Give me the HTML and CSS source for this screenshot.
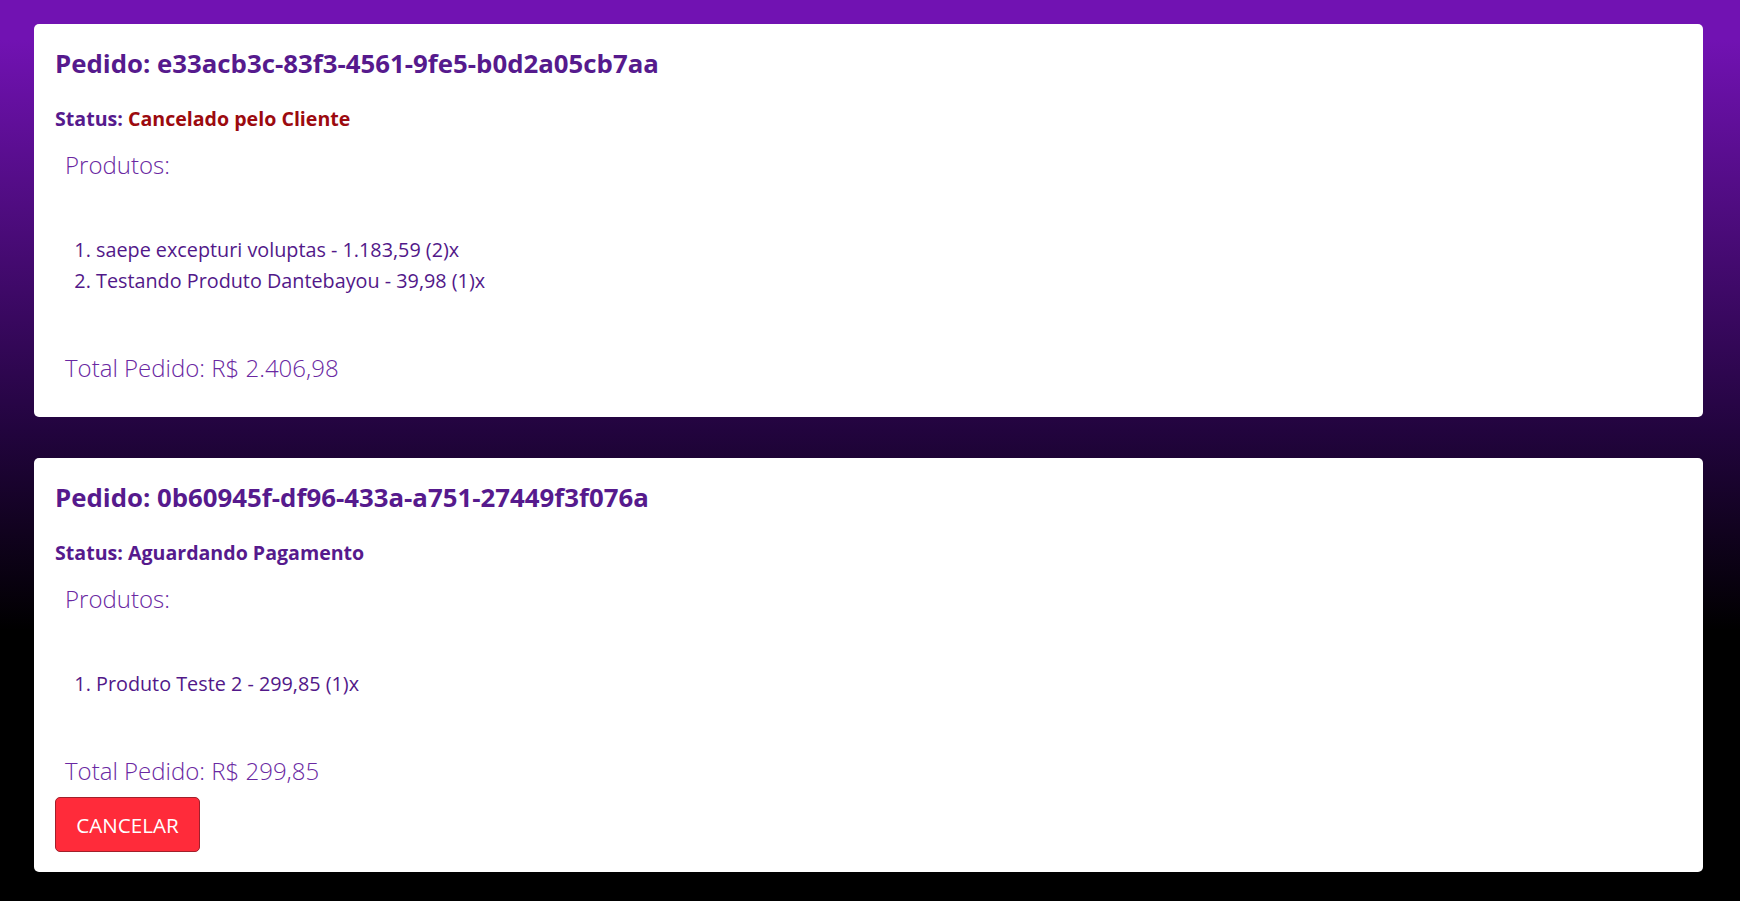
FILE: index.html
```html
<!DOCTYPE html>
<html lang="pt-BR">
<head>
<meta charset="utf-8">
<title>Pedidos</title>
<link rel="stylesheet" href="styles.css">
</head>
<body>
<main class="pedidos">
  <section class="pedido">
    <h2 class="pedido-titulo">Pedido: e33acb3c-83f3-4561-9fe5-b0d2a05cb7aa</h2>
    <h3 class="pedido-status">Status: <span class="status-cancelado">Cancelado pelo Cliente</span></h3>
    <div class="produtos">
      <p class="produtos-label">Produtos:</p>
      <ol class="produtos-lista">
        <li>saepe excepturi voluptas - 1.183,59 (2)x</li>
        <li>Testando Produto Dantebayou - 39,98 (1)x</li>
      </ol>
      <p class="total">Total Pedido: R$ 2.406,98</p>
    </div>
  </section>
  <section class="pedido">
    <h2 class="pedido-titulo">Pedido: 0b60945f-df96-433a-a751-27449f3f076a</h2>
    <h3 class="pedido-status">Status: Aguardando Pagamento</h3>
    <div class="produtos">
      <p class="produtos-label">Produtos:</p>
      <ol class="produtos-lista">
        <li>Produto Teste 2 - 299,85 (1)x</li>
      </ol>
      <p class="total">Total Pedido: R$ 299,85</p>
    </div>
    <button class="btn-cancelar" type="button">CANCELAR</button>
  </section>
</main>
</body>
</html>
```

FILE: styles.css
```css
html, body {
  margin: 0;
  padding: 0;
}
body {
  min-height: 100vh;
  font-family: "Open Sans", "Noto Sans", sans-serif;
  background: linear-gradient(180deg, #7112b2 0px, #7112b2 40px, #22043e 430px, #000000 630px);
  background-color: #000;
}
.pedidos {
  display: flex;
  flex-direction: column;
  gap: 41px;
  padding: 24px 37px 30px 34px;
}
.pedido {
  background: #ffffff;
  border-radius: 5px;
  padding: 24px 20px 20px 21px;
}
.pedido-titulo {
  margin: 0;
  font-size: 25.8px;
  line-height: 31px;
  font-weight: 700;
  color: #561a8d;
}
.pedido-status {
  margin: 28px 0 0;
  font-size: 19.6px;
  line-height: 24px;
  font-weight: 700;
  color: #561a8d;
}
.status-cancelado {
  color: #9c0a0f;
}
.produtos {
  padding-left: 10px;
}
.produtos:last-child {
  padding-bottom: 3px;
}
.produtos-label {
  margin: 19px 0 0;
  font-size: 24px;
  line-height: 30px;
  font-weight: 300;
  color: #6a28a2;
}
.produtos-lista {
  margin: 54px 0 0;
  padding-left: 31px;
  font-size: 19.8px;
  line-height: 31px;
  color: #521889;
}
.total {
  margin: 57px 0 11px;
  font-size: 24px;
  line-height: 30px;
  font-weight: 300;
  color: #6a28a2;
}
.btn-cancelar {
  display: block;
  width: 145px;
  height: 55px;
  padding: 0;
  font-family: "Open Sans", "Noto Sans", sans-serif;
  font-size: 20.6px;
  color: #ffffff;
  background: #ff2b3a;
  border: 1px solid #a1202b;
  border-radius: 5px;
}
```
